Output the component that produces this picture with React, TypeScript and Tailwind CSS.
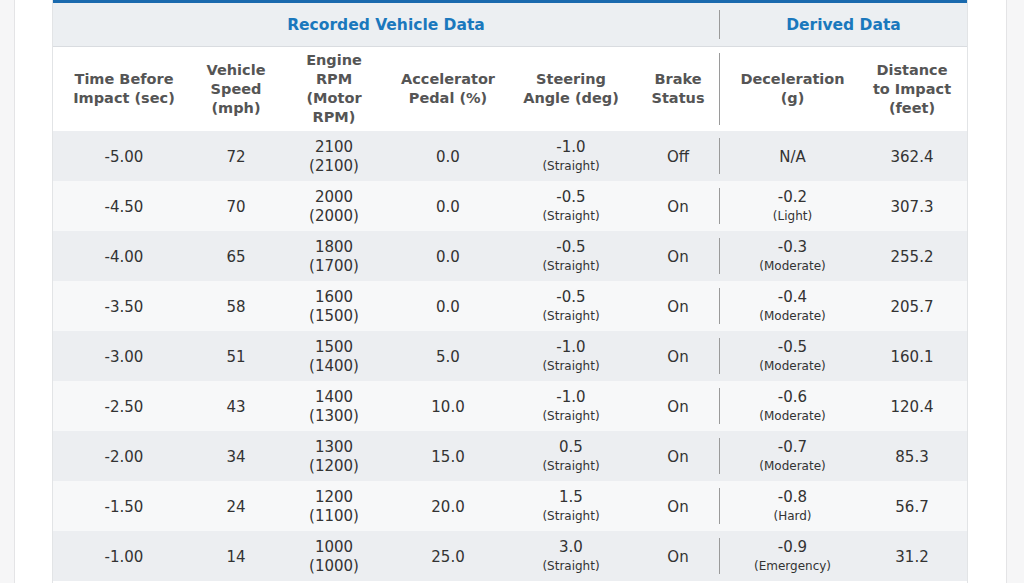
import React from "react";

type Row = {
  t: string;
  speed: string;
  rpm: string;
  motor: string;
  acc: string;
  steer: string;
  brake: string;
  dec: string;
  decLabel?: string;
  dist: string;
};

const rows: Row[] = [
  { t: "-5.00", speed: "72", rpm: "2100", motor: "(2100)", acc: "0.0", steer: "-1.0", brake: "Off", dec: "N/A", dist: "362.4" },
  { t: "-4.50", speed: "70", rpm: "2000", motor: "(2000)", acc: "0.0", steer: "-0.5", brake: "On", dec: "-0.2", decLabel: "(Light)", dist: "307.3" },
  { t: "-4.00", speed: "65", rpm: "1800", motor: "(1700)", acc: "0.0", steer: "-0.5", brake: "On", dec: "-0.3", decLabel: "(Moderate)", dist: "255.2" },
  { t: "-3.50", speed: "58", rpm: "1600", motor: "(1500)", acc: "0.0", steer: "-0.5", brake: "On", dec: "-0.4", decLabel: "(Moderate)", dist: "205.7" },
  { t: "-3.00", speed: "51", rpm: "1500", motor: "(1400)", acc: "5.0", steer: "-1.0", brake: "On", dec: "-0.5", decLabel: "(Moderate)", dist: "160.1" },
  { t: "-2.50", speed: "43", rpm: "1400", motor: "(1300)", acc: "10.0", steer: "-1.0", brake: "On", dec: "-0.6", decLabel: "(Moderate)", dist: "120.4" },
  { t: "-2.00", speed: "34", rpm: "1300", motor: "(1200)", acc: "15.0", steer: "0.5", brake: "On", dec: "-0.7", decLabel: "(Moderate)", dist: "85.3" },
  { t: "-1.50", speed: "24", rpm: "1200", motor: "(1100)", acc: "20.0", steer: "1.5", brake: "On", dec: "-0.8", decLabel: "(Hard)", dist: "56.7" },
  { t: "-1.00", speed: "14", rpm: "1000", motor: "(1000)", acc: "25.0", steer: "3.0", brake: "On", dec: "-0.9", decLabel: "(Emergency)", dist: "31.2" },
];

const cols = "grid grid-cols-[142px_82px_114px_114px_132px_82px_146px_102px]";

function Cell({ children }: { children: React.ReactNode }) {
  return <div className="flex flex-col items-center justify-center text-center">{children}</div>;
}

function DividedCell({ children, inset }: { children: React.ReactNode; inset: string }) {
  return (
    <div className="flex items-stretch">
      <div className={`border-l border-[#9a9a9a] ${inset}`} />
      <div className="flex flex-1 flex-col items-center justify-center text-center">{children}</div>
    </div>
  );
}

export default function App() {
  return (
    <div
      className="flex h-[583px] w-[1024px] overflow-hidden bg-white"
      style={{ fontFamily: '"DejaVu Sans", Verdana, sans-serif' }}
    >
      <div className="w-[15px] shrink-0 border-r border-[#e4e4e6] bg-[#f6f6f7]" />
      <div className="w-[37px] shrink-0 bg-white" />
      <div className="w-[916px] shrink-0 border-x border-[#e2e4e6] bg-white">
        <div className="h-[3px] bg-[#1a6aae]" />
        {/* Group header */}
        <div className="flex h-[44px] border-b border-[#d9dce0] bg-[#eceff2] pt-[3px] text-[15.5px] font-bold text-[#1a78bd]">
          <div className="flex w-[666px] items-center justify-center">Recorded Vehicle Data</div>
          <div className="flex w-[248px] items-stretch">
            <div className="mt-[4px] mb-[7px] border-l border-[#9a9a9a]" />
            <div className="flex flex-1 items-center justify-center">Derived Data</div>
          </div>
        </div>
        {/* Column header */}
        <div className={`${cols} h-[84px] bg-white text-[14.5px] font-bold leading-[19px] text-[#555]`}>
          <Cell>
            <span>Time Before</span>
            <span>Impact (sec)</span>
          </Cell>
          <Cell>
            <span>Vehicle</span>
            <span>Speed</span>
            <span>(mph)</span>
          </Cell>
          <Cell>
            <span>Engine</span>
            <span>RPM</span>
            <span>(Motor</span>
            <span>RPM)</span>
          </Cell>
          <Cell>
            <span>Accelerator</span>
            <span>Pedal (%)</span>
          </Cell>
          <Cell>
            <span>Steering</span>
            <span>Angle (deg)</span>
          </Cell>
          <Cell>
            <span>Brake</span>
            <span>Status</span>
          </Cell>
          <DividedCell inset="my-[6px]">
            <span>Deceleration</span>
            <span>(g)</span>
          </DividedCell>
          <Cell>
            <span className="pr-2">Distance</span>
            <span className="pr-2">to Impact</span>
            <span className="pr-2">(feet)</span>
          </Cell>
        </div>
        {/* Data rows */}
        {rows.map((r, i) => (
          <div
            key={r.t}
            className={`${cols} h-[50px] pt-[2px] text-[15px] leading-[19px] text-[#333] ${
              i % 2 === 0 ? "bg-[#eceef1]" : "bg-[#f7f8f9]"
            }`}
          >
            <Cell>{r.t}</Cell>
            <Cell>{r.speed}</Cell>
            <Cell>
              <span>{r.rpm}</span>
              <span>{r.motor}</span>
            </Cell>
            <Cell>{r.acc}</Cell>
            <Cell>
              <span>{r.steer}</span>
              <span className="text-[12px] leading-[19px]">(Straight)</span>
            </Cell>
            <Cell>{r.brake}</Cell>
            <DividedCell inset="mt-[5px] mb-[7px]">
              <span>{r.dec}</span>
              {r.decLabel && <span className="text-[12px] leading-[19px]">{r.decLabel}</span>}
            </DividedCell>
            <Cell>
              <span className="pr-2">{r.dist}</span>
            </Cell>
          </div>
        ))}
      </div>
      <div className="w-[38px] shrink-0 bg-white" />
      <div className="flex-1 border-l border-[#e4e4e6] bg-[#f6f6f7]" />
    </div>
  );
}
